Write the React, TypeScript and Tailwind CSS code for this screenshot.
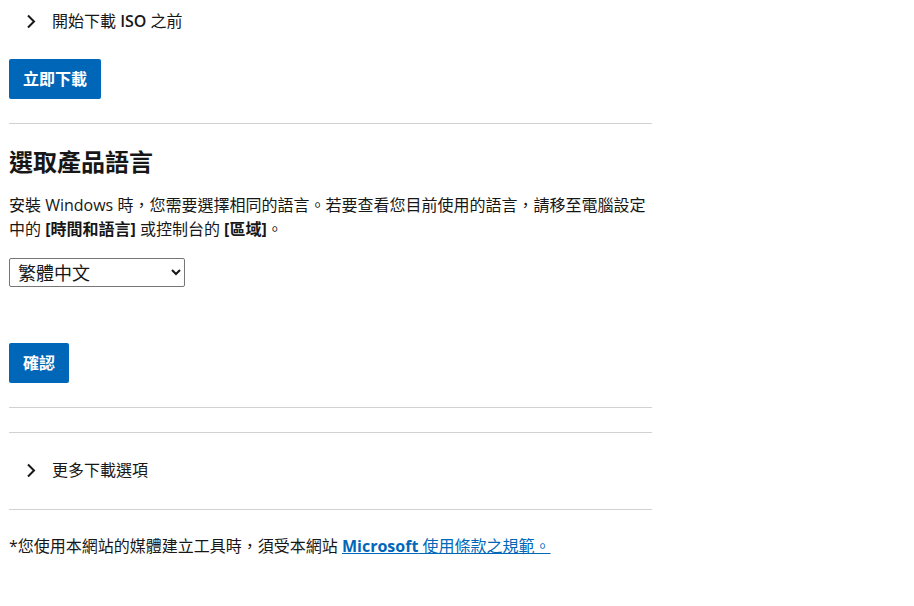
const font = {
  fontFamily: '"Open Sans", "Noto Sans CJK TC", sans-serif',
}

function Chevron() {
  return (
    <svg width="10" height="15" viewBox="0 0 10 15" fill="none" className="shrink-0">
      <path d="M2 1.5 L8 7.5 L2 13.5" stroke="#171717" strokeWidth="2" />
    </svg>
  )
}

function Expander({ children }: { children: React.ReactNode }) {
  return (
    <div className="flex items-center h-[42px] pl-[17px] gap-[16px] text-[16px] text-[#171717]">
      <Chevron />
      <span>{children}</span>
    </div>
  )
}

function BlueButton({ children }: { children: React.ReactNode }) {
  return (
    <button className="h-[40px] px-[14px] bg-[#0067b8] text-white text-[16px] font-bold rounded-[2px]">
      {children}
    </button>
  )
}

export default function App() {
  return (
    <div className="bg-white min-h-[606px] text-[#171717]" style={font}>
      <div className="w-[643px] ml-[9px]">
        <Expander>
          開始下載 <span className="font-semibold">ISO</span> 之前
        </Expander>
        <div className="mt-[17px]">
          <BlueButton>立即下載</BlueButton>
        </div>
        <hr className="mt-[24px] border-[#d2d2d2]" />

        <h2 className="mt-[22px] text-[24px] font-bold leading-[32px]">選取產品語言</h2>
        <p className="mt-[15px] text-[16px] leading-[24px]">
          安裝 Windows 時，您需要選擇相同的語言。若要查看您目前使用的語言，請移至電腦設定中的{' '}
          <b>[時間和語言]</b> 或控制台的 <b>[區域]</b>。
        </p>
        <select
          defaultValue="zh-tw"
          className="mt-[17px] w-[176px] h-[29px] border border-[#767676] rounded-[2px] pl-[4px] text-[18px] bg-white"
        >
          <option value="zh-tw">繁體中文</option>
        </select>
        <div className="mt-[56px]">
          <BlueButton>確認</BlueButton>
        </div>
        <hr className="mt-[24px] border-[#d2d2d2]" />
        <hr className="mt-[24px] border-[#d2d2d2]" />
        <div className="mt-[16px]">
          <Expander>更多下載選項</Expander>
        </div>
        <hr className="mt-[18px] border-[#d2d2d2]" />
        <p className="mt-[24px] text-[16px] leading-[24px]">
          *您使用本網站的媒體建立工具時，須受本網站{' '}
          <a href="#" className="text-[#0067b8] underline">
            <b>Microsoft</b> 使用條款之規範。
          </a>
        </p>
      </div>
    </div>
  )
}
